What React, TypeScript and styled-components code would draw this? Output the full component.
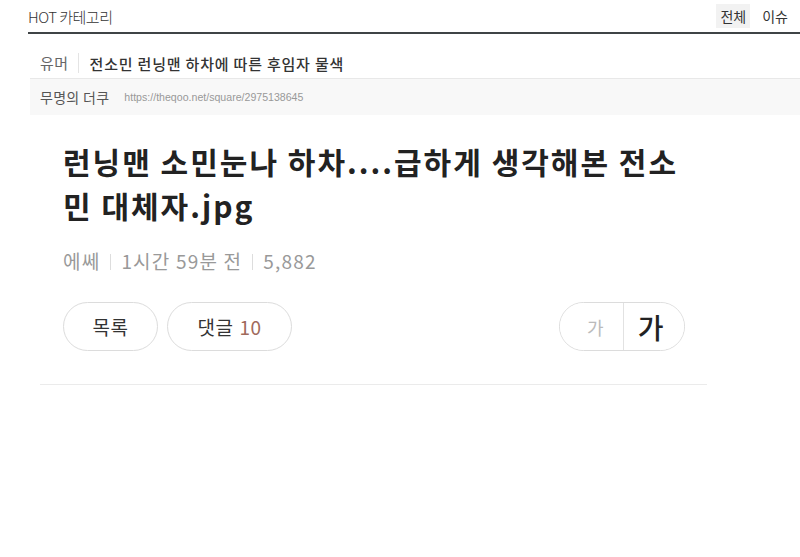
import styled, { createGlobalStyle } from "styled-components";

const GlobalStyle = createGlobalStyle`
  body {
    margin: 0;
    background: #ffffff;
    font-family: "Noto Sans CJK KR", "Noto Sans", sans-serif;
    color: #222;
  }
`;

const Page = styled.div`
  padding-left: 28px;
`;

const TopBar = styled.div`
  display: flex;
  align-items: center;
  justify-content: space-between;
  height: 32px;
  border-bottom: 2px solid #3f4446;
  padding-right: 8px;
`;

const TopTitle = styled.div`
  font-size: 15px;
  font-weight: 300;
  color: #333;
  letter-spacing: -0.5px;
`;

const Tabs = styled.div`
  display: flex;
  gap: 8px;
`;

const Tab = styled.span<{ $active?: boolean }>`
  font-size: 14px;
  padding: 2px 4px;
  color: #333;
  background: ${(p) => (p.$active ? "#f2f2f2" : "transparent")};
`;

const Article = styled.div`
  margin-left: 2px;
  margin-top: 14px;
`;

const CategoryRow = styled.div`
  display: flex;
  align-items: center;
  height: 30px;
  padding-left: 10px;
  border-bottom: 1px solid #e8e8e8;
`;

const Category = styled.span`
  font-size: 15px;
  color: #666;
  padding-right: 9px;
  margin-right: 11px;
  border-right: 1px solid #e4e4e4;
  line-height: 20px;
  letter-spacing: 0.5px;
`;

const SubTitle = styled.span`
  font-size: 15px;
  font-weight: 500;
  color: #333;
  letter-spacing: 0.8px;
`;

const AuthorRow = styled.div`
  display: flex;
  align-items: center;
  height: 36px;
  padding-left: 10px;
  background: #f8f8f8;
`;

const Author = styled.span`
  font-size: 14px;
  color: #555;
  margin-right: 15px;
  letter-spacing: 0.3px;
`;

const Url = styled.span`
  font-family: "Liberation Sans", sans-serif;
  font-size: 10.6px;
  color: #999;
`;

const Body = styled.div`
  width: 667px;
  margin-left: 12px;
  padding: 24px 22px 33px 23px;
  box-sizing: border-box;
  border-bottom: 1px solid #ebebeb;
`;

const Headline = styled.h1`
  margin: 0;
  font-size: 30px;
  font-weight: 700;
  line-height: 44px;
  color: #222;
  letter-spacing: 2px;
`;

const Meta = styled.div`
  display: flex;
  align-items: center;
  margin-top: 20px;
  font-size: 19px;
  line-height: 28px;
  color: #999;
  letter-spacing: 1.2px;
`;

const MetaItem = styled.span`
  & + &::before {
    content: "";
    display: inline-block;
    width: 1px;
    height: 16px;
    background: #ddd;
    margin: 0 10px;
    vertical-align: -1px;
  }
`;

const Actions = styled.div`
  display: flex;
  align-items: center;
  margin-top: 27px;
`;

const PillButton = styled.button<{ $width: number }>`
  width: ${(p) => p.$width}px;
  height: 49px;
  margin-right: 9px;
  border: 1px solid #dcdcdc;
  border-radius: 25px;
  background: #fff;
  font-family: inherit;
  font-size: 19px;
  color: #333;
  padding: 0;
  letter-spacing: 0.5px;
`;

const Count = styled.span`
  color: #a06a5c;
  margin-left: 6px;
`;

const SizeToggle = styled.div`
  display: flex;
  margin-left: auto;
  width: 126px;
  height: 49px;
  border: 1px solid #dcdcdc;
  border-radius: 25px;
  box-sizing: border-box;
  overflow: hidden;
`;

const SizeButton = styled.button<{ $big?: boolean }>`
  flex: 1;
  border: none;
  background: #fff;
  padding: 0;
  font-family: inherit;
  font-size: ${(p) => (p.$big ? "28px" : "18px")};
  font-weight: ${(p) => (p.$big ? 500 : 400)};
  color: ${(p) => (p.$big ? "#222" : "#bbb")};
  padding-left: ${(p) => (p.$big ? "0" : "8px")};
  padding-right: ${(p) => (p.$big ? "6px" : "0")};
  & + & {
    border-left: 1px solid #e2e2e2;
  }
`;

export default function App() {
  return (
    <>
      <GlobalStyle />
      <Page>
        <TopBar>
          <TopTitle>HOT 카테고리</TopTitle>
          <Tabs>
            <Tab $active>전체</Tab>
            <Tab>이슈</Tab>
          </Tabs>
        </TopBar>
        <Article>
          <CategoryRow>
            <Category>유머</Category>
            <SubTitle>전소민 런닝맨 하차에 따른 후임자 물색</SubTitle>
          </CategoryRow>
          <AuthorRow>
            <Author>무명의 더쿠</Author>
            <Url>https://theqoo.net/square/2975138645</Url>
          </AuthorRow>
        </Article>
        <Body>
          <Headline>런닝맨 소민눈나 하차....급하게 생각해본 전소민 대체자.jpg</Headline>
          <Meta>
            <MetaItem>에쎄</MetaItem>
            <MetaItem>1시간 59분 전</MetaItem>
            <MetaItem>5,882</MetaItem>
          </Meta>
          <Actions>
            <PillButton $width={95}>목록</PillButton>
            <PillButton $width={125}>
              댓글<Count>10</Count>
            </PillButton>
            <SizeToggle>
              <SizeButton>가</SizeButton>
              <SizeButton $big>가</SizeButton>
            </SizeToggle>
          </Actions>
        </Body>
      </Page>
    </>
  );
}
